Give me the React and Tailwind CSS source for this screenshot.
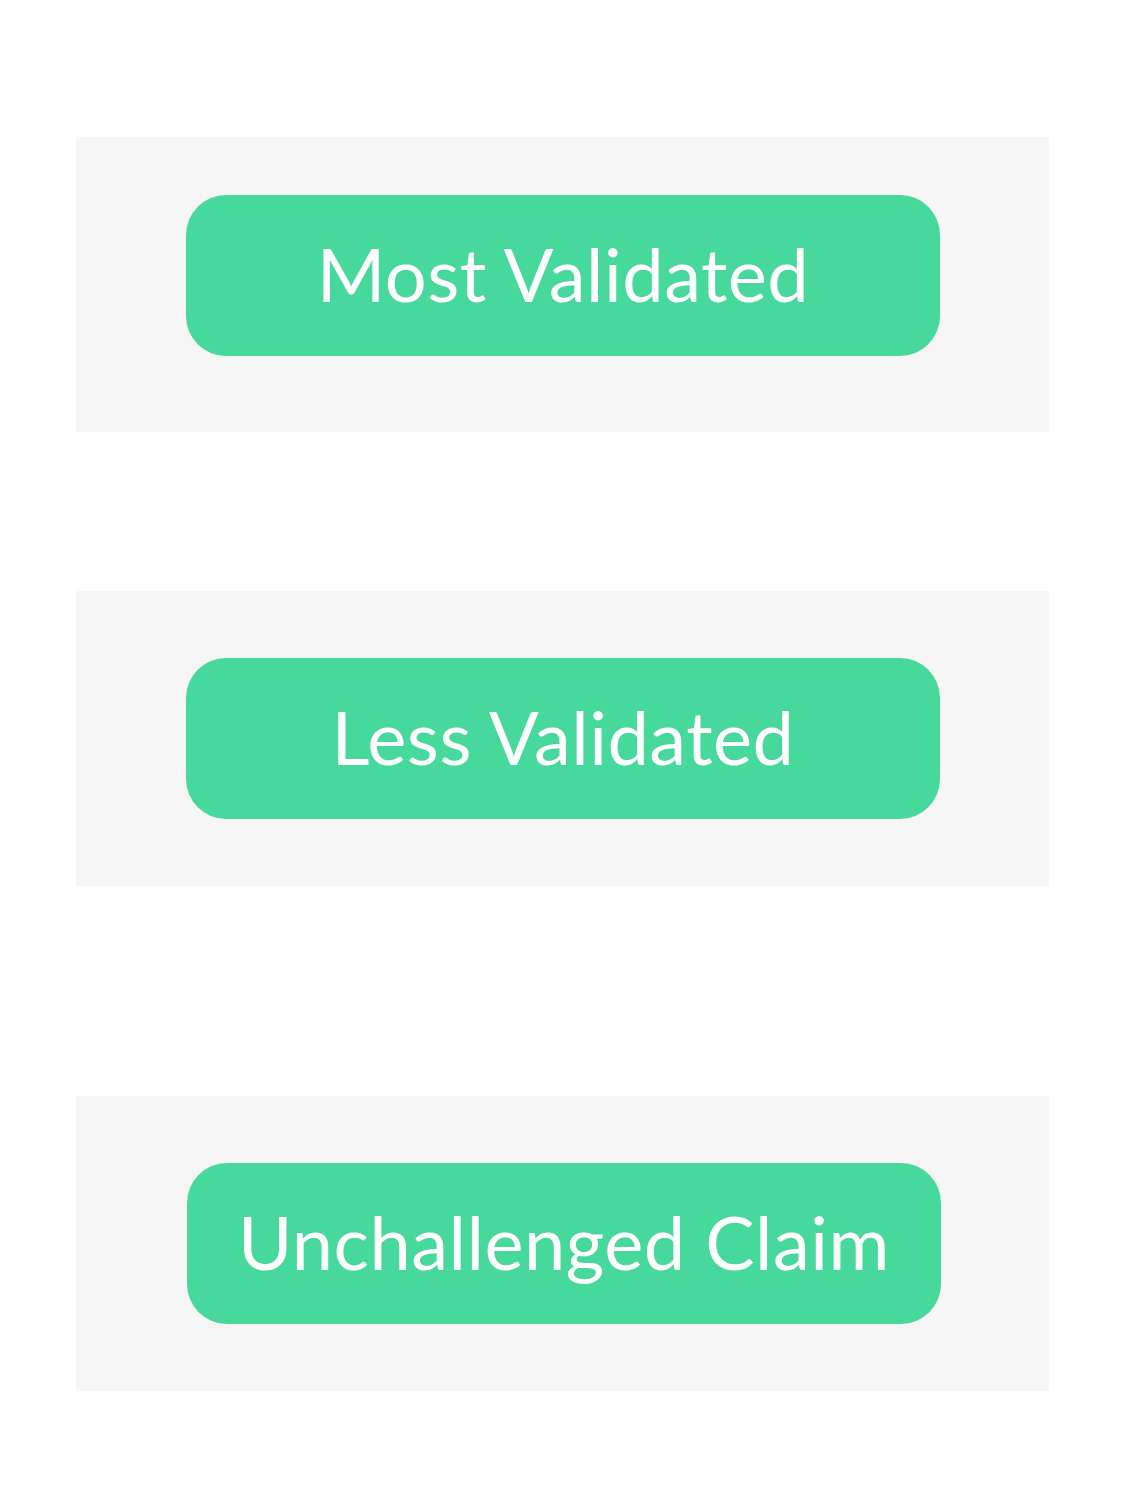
const buttons = [
  { label: "Most Validated", panel: "pt-[58px] pb-[76px]", btn: "ml-[110px]" },
  { label: "Less Validated", panel: "mt-[159px] py-[67px]", btn: "ml-[110px]" },
  { label: "Unchallenged Claim", panel: "mt-[210px] py-[67px]", btn: "ml-[111px]" },
];

export default function App() {
  return (
    <div
      className="flex min-h-[1486px] w-[1125px] flex-col bg-white pl-[76px] pt-[137px]"
      style={{ fontFamily: "Lato, 'Open Sans', sans-serif" }}
    >
      {buttons.map((item) => (
        <div key={item.label} className={`w-[973px] bg-[#f6f6f6] ${item.panel}`}>
          <button
            type="button"
            className={`flex h-[161px] w-[754px] items-center justify-center rounded-[40px] bg-[#47d99b] pb-[4px] text-[74px] font-normal leading-none tracking-[0.5px] text-white ${item.btn}`}
          >
            {item.label}
          </button>
        </div>
      ))}
    </div>
  );
}
